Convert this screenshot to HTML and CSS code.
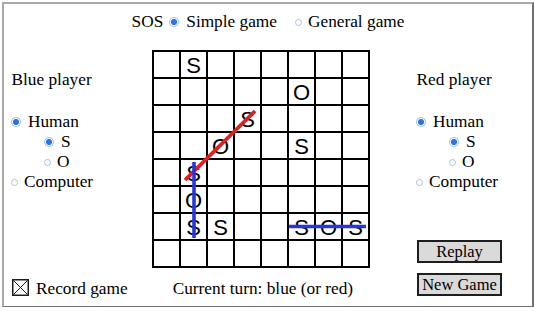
FILE: index.html
```html
<!DOCTYPE html>
<html lang="en">
<head>
<meta charset="utf-8">
<title>SOS</title>
<link rel="stylesheet" href="styles.css">
</head>
<body>
<div class="frame">
  <div class="mode-bar">
    <span class="mode-label">SOS</span>
    <div class="opt"><span class="radio on"></span>Simple game</div>
    <div class="opt general"><span class="radio"></span>General game</div>
  </div>

  <div class="player blue-player">
    <div class="player-title">Blue player</div>
    <div class="options">
      <div class="opt"><span class="radio on"></span>Human</div>
      <div class="opt sub"><span class="radio on"></span>S</div>
      <div class="opt sub"><span class="radio"></span>O</div>
      <div class="opt"><span class="radio"></span>Computer</div>
    </div>
  </div>

  <div class="board">
    <div class="cell"></div><div class="cell">S</div><div class="cell"></div><div class="cell"></div><div class="cell"></div><div class="cell"></div><div class="cell"></div><div class="cell"></div>
    <div class="cell"></div><div class="cell"></div><div class="cell"></div><div class="cell"></div><div class="cell"></div><div class="cell">O</div><div class="cell"></div><div class="cell"></div>
    <div class="cell"></div><div class="cell"></div><div class="cell"></div><div class="cell">S</div><div class="cell"></div><div class="cell"></div><div class="cell"></div><div class="cell"></div>
    <div class="cell"></div><div class="cell"></div><div class="cell">O</div><div class="cell"></div><div class="cell"></div><div class="cell">S</div><div class="cell"></div><div class="cell"></div>
    <div class="cell"></div><div class="cell">S</div><div class="cell"></div><div class="cell"></div><div class="cell"></div><div class="cell"></div><div class="cell"></div><div class="cell"></div>
    <div class="cell"></div><div class="cell">O</div><div class="cell"></div><div class="cell"></div><div class="cell"></div><div class="cell"></div><div class="cell"></div><div class="cell"></div>
    <div class="cell"></div><div class="cell">S</div><div class="cell">S</div><div class="cell"></div><div class="cell"></div><div class="cell">S</div><div class="cell">O</div><div class="cell">S</div>
    <div class="cell"></div><div class="cell"></div><div class="cell"></div><div class="cell"></div><div class="cell"></div><div class="cell"></div><div class="cell"></div><div class="cell"></div>
    <svg class="sos-lines" width="218" height="218" viewBox="0 0 218 218">
      <line class="red-line" x1="33" y1="130" x2="103" y2="61"/>
      <line class="blue-line" x1="42" y1="112" x2="42" y2="188"/>
      <line class="blue-line" x1="137" y1="176.5" x2="214" y2="176.5"/>
    </svg>
  </div>

  <div class="player red-player">
    <div class="player-title">Red player</div>
    <div class="options">
      <div class="opt"><span class="radio on"></span>Human</div>
      <div class="opt sub"><span class="radio on"></span>S</div>
      <div class="opt sub"><span class="radio"></span>O</div>
      <div class="opt"><span class="radio"></span>Computer</div>
    </div>
    <div class="actions">
      <button class="btn" type="button">Replay</button>
      <button class="btn" type="button">New Game</button>
    </div>
  </div>

  <div class="footer">
    <div class="record">
      <svg class="checkbox" width="17" height="17" viewBox="0 0 17 17">
        <rect x="0.75" y="0.75" width="15.5" height="15.5" fill="#fff" stroke="#1c1c1c" stroke-width="1.5"/>
        <line x1="1.5" y1="1.5" x2="15.5" y2="15.5" stroke="#1c1c1c" stroke-width="1"/>
        <line x1="15.5" y1="1.5" x2="1.5" y2="15.5" stroke="#1c1c1c" stroke-width="1"/>
      </svg>
      <span>Record game</span>
    </div>
    <div class="turn">Current turn: blue (or red)</div>
  </div>
</div>
</body>
</html>
```

FILE: styles.css
```css
html, body {
  margin: 0;
  padding: 0;
  background: #fff;
}

body {
  font-family: "Liberation Serif", "Times New Roman", serif;
  font-size: 17.3px;
  line-height: 20px;
  color: #000;
}

.frame {
  margin: 2px 0 0 2px;
  width: 528px;
  height: 302px;
  border-top: 2px solid #a9a9a9;
  border-left: 2px solid #a9a9a9;
  border-right: 2px solid #707070;
  border-bottom: 1px solid #707070;
  display: grid;
  grid-template-columns: 148px 218px 1fr;
  grid-template-rows: 46px 218px 1fr;
}

.mode-bar {
  grid-column: 1 / -1;
  grid-row: 1;
  display: flex;
  justify-content: center;
  align-items: flex-start;
  padding-top: 8px;
}

.mode-label {
  margin-right: 6px;
}

.opt {
  display: flex;
  align-items: center;
  height: 20px;
  white-space: nowrap;
}

.opt.general {
  margin-left: 18px;
}

.radio {
  flex: none;
  box-sizing: border-box;
  width: 7px;
  height: 7px;
  border: 1px solid #a7c1e6;
  border-radius: 50%;
  background: #fff;
  margin-right: 6px;
}

.radio.on {
  width: 10px;
  height: 10px;
  border: none;
  background: radial-gradient(circle at center, #2f72e4 0 2.7px, #f2f6fd 3.3px 3.7px, #a6c4f0 4.3px 5px, transparent 5.2px);
  margin-right: 7px;
}

.player {
  grid-row: 2;
  display: flex;
  flex-direction: column;
  padding-top: 20px;
}

.blue-player {
  grid-column: 1;
  padding-left: 7px;
}

.red-player {
  grid-column: 3;
  grid-row: 2 / 4;
  padding-left: 46px;
  padding-bottom: 10px;
}

.player-title {
  padding-left: 0.5px;
}

.options {
  margin-top: 22px;
  display: flex;
  flex-direction: column;
}

.opt.sub {
  padding-left: 33px;
}

.board {
  grid-column: 2;
  grid-row: 2;
  position: relative;
  display: grid;
  grid-template-columns: repeat(8, 25px);
  grid-auto-rows: 25px;
  gap: 2px;
  padding: 2px;
  width: 218px;
  height: 218px;
  box-sizing: border-box;
  background: #000;
}

.cell {
  background: #fff;
  display: flex;
  align-items: center;
  justify-content: center;
  font-family: "Liberation Sans", Arial, sans-serif;
  font-size: 22px;
  line-height: 25px;
  padding-top: 1px;
  box-sizing: border-box;
  color: #000;
}

.sos-lines {
  position: absolute;
  left: 0;
  top: 0;
  pointer-events: none;
}

.red-line {
  stroke: #e11f1f;
  stroke-width: 3.8;
}

.blue-line {
  stroke: #2537dc;
  stroke-width: 3.6;
}

.actions {
  margin-top: auto;
  display: flex;
  flex-direction: column;
  gap: 10px;
  padding-left: 1px;
}

.btn {
  width: 85px;
  height: 23px;
  box-sizing: border-box;
  border: 2px solid #1e1e1e;
  background: #dadada;
  font-family: "Liberation Serif", "Times New Roman", serif;
  font-size: 16.5px;
  line-height: 18px;
  padding: 0;
  color: #000;
}

.footer {
  grid-column: 1 / 3;
  grid-row: 3;
  display: flex;
  align-items: flex-start;
  padding-top: 11px;
  padding-left: 8px;
}

.record {
  display: flex;
  align-items: flex-start;
}

.checkbox {
  flex: none;
  margin-right: 7px;
}

.turn {
  margin-left: 45px;
}
```
